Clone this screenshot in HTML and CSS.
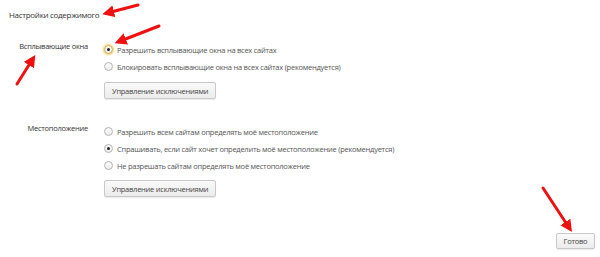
FILE: index.html
```html
<!DOCTYPE html>
<html lang="ru">
<head>
  <meta charset="UTF-8">
  <title>Настройки содержимого</title>
  <link rel="stylesheet" href="styles.css">
</head>
<body>

<div class="page">
  <!-- Title -->
  <h1 class="title">Настройки содержимого</h1>

  <!-- Popups -->
  <div class="group">
    <div class="group-label">Всплывающие окна</div>
    <div class="group-body">
      <div class="option"><span class="radio checked focused"></span>Разрешить всплывающие окна на всех сайтах</div>
      <div class="option"><span class="radio"></span>Блокировать всплывающие окна на всех сайтах (рекомендуется)</div>
      <button class="btn">Управление исключениями</button>
    </div>
  </div>

  <!-- Location -->
  <div class="group group-location">
    <div class="group-label">Местоположение</div>
    <div class="group-body">
      <div class="option"><span class="radio"></span>Разрешить всем сайтам определять моё местоположение</div>
      <div class="option"><span class="radio checked"></span>Спрашивать, если сайт хочет определить моё местоположение (рекомендуется)</div>
      <div class="option"><span class="radio"></span>Не разрешать сайтам определять моё местоположение</div>
      <button class="btn">Управление исключениями</button>
    </div>
  </div>

  <div class="footer">
    <button class="btn btn-done">Готово</button>
  </div>

  <!-- Red arrows drawn over the screenshot -->
  <svg class="arrows" width="600" height="257" viewBox="0 0 600 257">
    <defs>
      <marker id="head" markerWidth="4" markerHeight="4" refX="1" refY="2" orient="auto" markerUnits="strokeWidth">
        <path d="M0,0 L4,2 L0,4 Z" fill="#f01010"/>
      </marker>
    </defs>
    <line x1="138" y1="5" x2="111" y2="12" marker-end="url(#head)"/>
    <line x1="159" y1="26" x2="123" y2="40" marker-end="url(#head)"/>
    <line x1="17" y1="84" x2="30.5" y2="62.5" marker-end="url(#head)"/>
    <line x1="543" y1="188" x2="567" y2="224.5" marker-end="url(#head)"/>
  </svg>
</div>

</body>
</html>
```

FILE: styles.css
```css
body, html {
  margin: 0;
  padding: 0;
  background: #fff;
  font-family: "Open Sans", "Noto Sans", sans-serif;
  color: #444;
}
.page {
  position: relative;
  width: 600px;
  height: 257px;
  overflow: hidden;
}
.title {
  margin: 0;
  padding: 8px 0 0 9px;
  font-size: 8px;
  letter-spacing: -0.3px;
  font-weight: normal;
  line-height: 14px;
  color: #333;
}
.group {
  display: grid;
  grid-template-columns: 88px 1fr;
  column-gap: 16px;
  margin-top: 19px;
}
.group-location {
  margin-top: 24px;
}
.group-label {
  text-align: right;
  font-size: 7.5px;
  letter-spacing: -0.25px;
  line-height: 11px;
  color: #333;
}
.group-body {
  display: flex;
  flex-direction: column;
  align-items: flex-start;
}
.option {
  display: flex;
  align-items: center;
  gap: 4px;
  height: 17px;
  font-size: 7.5px;
  letter-spacing: -0.25px;
  color: #555;
}
.radio {
  box-sizing: border-box;
  width: 9px;
  height: 9px;
  border-radius: 50%;
  border: 1px solid #b4b4b4;
  background: linear-gradient(#fdfdfd, #ececec);
  position: relative;
}
.radio.checked::after {
  content: "";
  position: absolute;
  left: 2px;
  top: 2px;
  width: 3px;
  height: 3px;
  border-radius: 50%;
  background: #222;
}
.radio.focused {
  box-shadow: 0 0 2px 1px #f3d36a;
  border-color: #c9a94a;
}
.btn {
  margin-top: 7px;
  height: 17px;
  padding: 0 7px;
  font-family: inherit;
  font-size: 7.5px;
  letter-spacing: -0.25px;
  color: #444;
  background: linear-gradient(#fafafa, #ececec);
  border: 1px solid #c8c8c8;
  border-radius: 2px;
  box-shadow: 0 1px 1px rgba(0,0,0,0.08);
}
.group-location .btn {
  margin-top: 6px;
}
.footer {
  display: flex;
  justify-content: flex-end;
  padding-right: 5px;
  margin-top: 36px;
}
.btn-done {
  margin-top: 0;
  height: 16px;
  width: 39px;
  padding: 0;
}
.arrows {
  position: absolute;
  left: 0;
  top: 0;
  pointer-events: none;
}
.arrows line {
  stroke: #f01010;
  stroke-width: 3;
  stroke-linecap: round;
}
```
